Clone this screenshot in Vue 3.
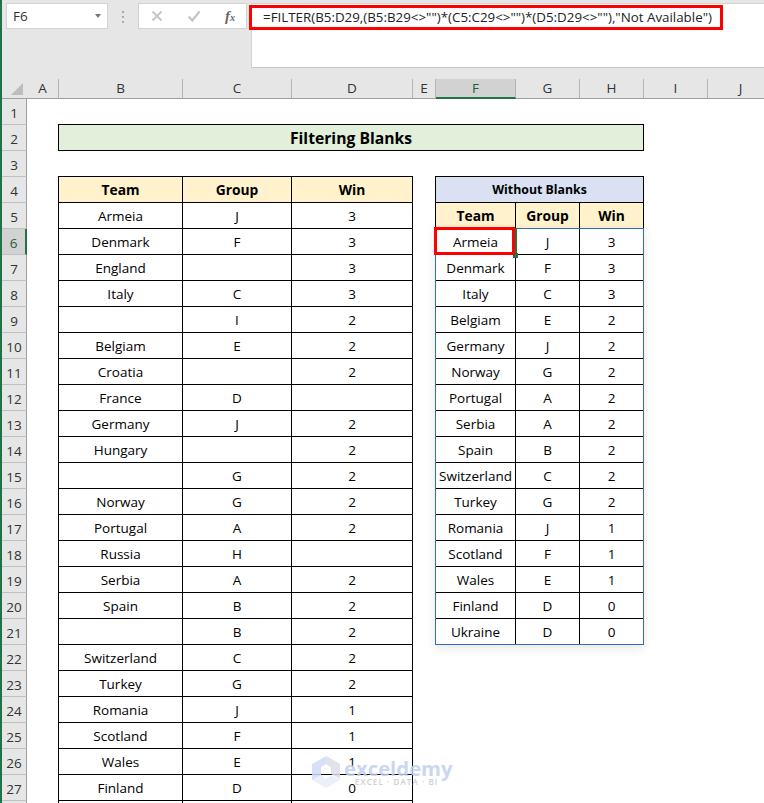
<script setup>
const colHeads = [
  { label: 'A', w: 32 }, { label: 'B', w: 124 }, { label: 'C', w: 109 }, { label: 'D', w: 121 },
  { label: 'E', w: 23 }, { label: 'F', w: 80, active: true }, { label: 'G', w: 64 }, { label: 'H', w: 64 },
  { label: 'I', w: 64 }, { label: 'J', w: 66 }
]
const rowHeads = Array.from({ length: 28 }, (_, i) => i + 1)
const source = [
  ['Armeia', 'J', '3'], ['Denmark', 'F', '3'], ['England', '', '3'], ['Italy', 'C', '3'], ['', 'I', '2'],
  ['Belgiam', 'E', '2'], ['Croatia', '', '2'], ['France', 'D', ''], ['Germany', 'J', '2'], ['Hungary', '', '2'],
  ['', 'G', '2'], ['Norway', 'G', '2'], ['Portugal', 'A', '2'], ['Russia', 'H', ''], ['Serbia', 'A', '2'],
  ['Spain', 'B', '2'], ['', 'B', '2'], ['Switzerland', 'C', '2'], ['Turkey', 'G', '2'], ['Romania', 'J', '1'],
  ['Scotland', 'F', '1'], ['Wales', 'E', '1'], ['Finland', 'D', '0'], ['Ukraine', 'D', '0']
]
const filtered = source.filter(r => r[0] && r[1] && r[2])
const heads = ['Team', 'Group', 'Win']
</script>

<template>
  <div class="app">
    <header class="formula-row">
      <div class="name-box">
        <span>F6</span>
        <i class="caret"></i>
      </div>
      <div class="grip"><b></b><b></b><b></b></div>
      <div class="fn-box">
        <svg width="12" height="12" viewBox="0 0 12 12"><path d="M1.5 1.5l9 9M10.5 1.5l-9 9" stroke="#c4c4c4" stroke-width="1.8" fill="none"/></svg>
        <svg width="14" height="12" viewBox="0 0 14 12"><path d="M1.5 6.5l3.8 4L12.5 1.5" stroke="#c4c4c4" stroke-width="2.2" fill="none"/></svg>
        <span class="fx">f<small>x</small></span>
      </div>
      <div class="formula-input">
        <span class="formula">=FILTER(B5:D29,(B5:B29&lt;&gt;"")*(C5:C29&lt;&gt;"")*(D5:D29&lt;&gt;""),"Not Available")</span>
        <div class="formula-mark"></div>
      </div>
    </header>

    <div class="col-heads">
      <div class="corner"><i></i></div>
      <div
        v-for="c in colHeads"
        :key="c.label"
        class="col-head"
        :class="{ active: c.active }"
        :style="{ width: c.w + 'px' }"
      >{{ c.label }}</div>
    </div>

    <div class="sheet">
      <div class="row-heads">
        <div v-for="r in rowHeads" :key="r" class="row-head" :class="{ active: r === 6 }">{{ r }}</div>
      </div>

      <div class="cells">
        <div class="title">Filtering Blanks</div>

        <div class="table table-left">
          <div v-for="h in heads" :key="h" class="cell head">{{ h }}</div>
          <template v-for="(r, i) in source" :key="i">
            <div v-for="(v, j) in r" :key="j" class="cell">{{ v }}</div>
          </template>
        </div>

        <div class="table table-right">
          <div class="cell caption">Without Blanks</div>
          <div v-for="h in heads" :key="h" class="cell head">{{ h }}</div>
          <template v-for="(r, i) in filtered" :key="i">
            <div v-for="(v, j) in r" :key="j" class="cell">{{ v }}</div>
          </template>
          <div class="spill"></div>
          <div class="cursor"></div>
          <div class="handle"></div>
          <div class="cell-mark"></div>
        </div>
      </div>
    </div>

    <div class="watermark">
      <svg width="30" height="32" viewBox="0 0 30 32">
        <path d="M15 0L29 8V16L20 11L15 8L10 11V21L1 24V8Z" fill="#cfdcf6"/>
        <path d="M15 0L29 8V23L20 18V11L15 8Z" fill="#dcdfe8"/>
        <path d="M1 24L10 19L15 23L20 19L29 24L15 32Z" fill="#e8eef9"/>
      </svg>
      <div class="wm-text">
        <span class="wm-main">exceldemy</span>
        <span class="wm-sub">EXCEL · DATA · BI</span>
      </div>
    </div>
  </div>
</template>

<style>
html, body { margin: 0; padding: 0; background: #fff; }
</style>

<style scoped>
.app {
  position: relative;
  width: 764px;
  height: 803px;
  overflow: hidden;
  background: #fff;
  font-family: "Open Sans", "Noto Sans", sans-serif;
  font-size: 13.5px;
  color: #000;
  box-sizing: border-box;
  border-left: 2px solid #217346;
}
.formula-row {
  display: flex;
  align-items: flex-start;
  height: 79px;
  box-sizing: border-box;
  padding: 3px 0 0 4px;
  background: #e6e6e6;
}
.name-box {
  display: flex;
  align-items: center;
  justify-content: space-between;
  box-sizing: border-box;
  width: 102px;
  height: 26px;
  padding: 0 6px;
  background: #fff;
  border: 1px solid #d4d4d4;
  color: #333;
}
.caret {
  width: 0;
  height: 0;
  border-left: 3.5px solid transparent;
  border-right: 3.5px solid transparent;
  border-top: 4px solid #777;
}
.grip {
  display: flex;
  flex-direction: column;
  gap: 3px;
  width: 30px;
  padding: 8px 0 0 14px;
  box-sizing: border-box;
}
.grip b { width: 2px; height: 2px; background: #aaa; margin: 0; }
.fn-box {
  display: flex;
  align-items: center;
  box-sizing: border-box;
  width: 109px;
  height: 26px;
  padding: 0 11px 0 12px;
  justify-content: space-between;
  background: #fff;
  border: 1px solid #d4d4d4;
  margin-right: 4px;
}
.fx {
  font-family: "Liberation Serif", serif;
  font-style: italic;
  font-weight: 700;
  font-size: 15px;
  color: #666;
}
.fx small { font-size: 10px; }
.formula-input {
  position: relative;
  flex: 1;
  height: 65px;
  box-sizing: border-box;
  padding: 2px 0 0 11px;
  background: #fff;
  border-top: 1px solid #d4d4d4;
  border-left: 1px solid #d4d4d4;
  border-bottom: 1px solid #c6c6c6;
  line-height: 22px;
  color: #222;
  white-space: nowrap;
}
.formula { font-size: 13.35px; }
.formula-mark {
  position: absolute;
  left: -3px;
  top: 1px;
  width: 474px;
  height: 25px;
  box-sizing: border-box;
  border: 3px solid #f00;
}
.col-heads {
  display: flex;
  height: 20px;
  box-sizing: border-box;
  background: #e6e6e6;
  border-bottom: 1px solid #a0a0a0;
}
.corner {
  position: relative;
  width: 25px;
  flex: none;
}
.corner i {
  position: absolute;
  left: 9px;
  top: 4px;
  width: 0;
  height: 0;
  border-left: 12px solid transparent;
  border-bottom: 12px solid #bdbdbd;
}
.col-head {
  flex: none;
  box-sizing: border-box;
  text-align: center;
  line-height: 19px;
  color: #333;
  border-right: 1px solid #b4b4b4;
}
.col-head.active {
  background: #d2d2d2;
  border-bottom: 2px solid #217346;
  height: 20px;
  color: #1f5c3a;
}
.sheet {
  display: flex;
  align-items: flex-start;
}
.row-heads {
  flex: none;
  width: 25px;
}
.row-head {
  box-sizing: border-box;
  height: 26px;
  padding-top: 4px;
  line-height: 20px;
  text-align: center;
  color: #333;
  background: #e6e6e6;
  border-right: 1px solid #a0a0a0;
  border-bottom: 1px solid #c0c0c0;
}
.row-head.active {
  background: #d2d2d2;
  color: #1f5c3a;
  border-right: 2px solid #217346;
}
.cells {
  display: grid;
  grid-template-columns: 31px 124px 109px 121px 23px 80px 64px 64px;
  grid-auto-rows: 26px;
}
.title {
  grid-column: 2 / 9;
  grid-row: 2;
  margin-top: -1px;
  height: 27px;
  box-sizing: border-box;
  width: 586px;
  border: 1px solid #000;
  background: #e2efda;
  font-weight: 700;
  font-size: 15.7px;
  line-height: 27px;
  text-align: center;
}
.table {
  position: relative;
  display: grid;
  grid-auto-rows: 26px;
  margin-top: -1px;
  align-self: start;
  justify-self: start;
  border-bottom: 1px solid #000;
}
.table-left {
  grid-column: 2 / 5;
  grid-row: 4 / span 26;
  grid-template-columns: 124px 109px 122px;
}
.table-right {
  grid-column: 6 / 9;
  grid-row: 4 / span 19;
  grid-template-columns: 80px 64px 65px;
}
.cell {
  box-sizing: border-box;
  border-top: 1px solid #000;
  border-left: 1px solid #000;
  text-align: center;
  line-height: 27px;
  white-space: nowrap;
}
.cell:nth-child(3n) { border-right: 1px solid #000; }
.head {
  background: #fff2cc;
  font-weight: 700;
  font-size: 13.8px;
  line-height: 25px;
}
.table-right .cell { border-right: 0; }
.table-right .cell:nth-child(3n + 1) { border-right: 1px solid #000; }
.caption {
  grid-column: 1 / 4;
  background: #d9e1f2;
  font-weight: 700;
  font-size: 12.3px;
  line-height: 25px;
  border-right: 1px solid #000 !important;
}
.spill {
  position: absolute;
  left: 0;
  top: 52px;
  width: 209px;
  height: 417px;
  box-sizing: border-box;
  border: 1px solid #2f6ebd;
  box-shadow: 0 3px 10px rgba(0, 0, 0, 0.1);
}
.cursor {
  position: absolute;
  left: 79px;
  top: 52px;
  width: 3px;
  height: 27px;
  background: #217346;
}
.handle {
  position: absolute;
  left: 78px;
  top: 77px;
  width: 5px;
  height: 5px;
  background: #217346;
}
.cell-mark {
  position: absolute;
  left: -1px;
  top: 51px;
  width: 81px;
  height: 28px;
  box-sizing: border-box;
  border: 3px solid #f00;
}
.watermark {
  position: absolute;
  left: 309px;
  top: 756px;
  display: flex;
  gap: 3px;
  pointer-events: none;
  opacity: 0.85;
}
.wm-text {
  position: relative;
  width: 110px;
}
.wm-main {
  display: block;
  font-family: "Open Sans", sans-serif;
  font-weight: 700;
  font-size: 20.3px;
  line-height: 24px;
  color: #c2d1f0;
  white-space: nowrap;
}
.wm-sub {
  position: absolute;
  left: 11px;
  top: 21px;
  font-size: 8px;
  font-weight: 600;
  letter-spacing: 1.1px;
  line-height: 10px;
  color: #c8c8c8;
  white-space: nowrap;
}
</style>
